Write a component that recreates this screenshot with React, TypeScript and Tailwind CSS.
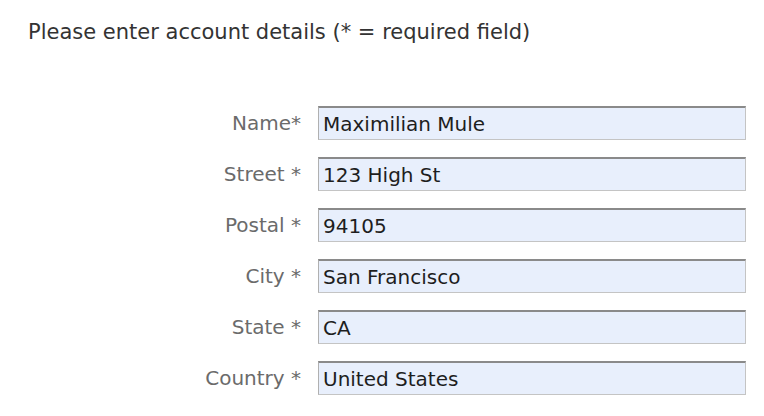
import React from 'react';

const fields = [
  { label: 'Name*', value: 'Maximilian Mule' },
  { label: 'Street *', value: '123 High St' },
  { label: 'Postal *', value: '94105' },
  { label: 'City *', value: 'San Francisco' },
  { label: 'State *', value: 'CA' },
  { label: 'Country *', value: 'United States' },
];

export default function App() {
  return (
    <div
      className="w-[764px] h-[416px] bg-white overflow-hidden"
      style={{ fontFamily: '"DejaVu Sans", "Noto Sans", sans-serif' }}
    >
      <p className="pl-[28px] pt-[18px] text-[21px] leading-[28px] text-[#333]">
        Please enter account details (* = required field)
      </p>
      <div className="mt-[60px] flex flex-col gap-[17px]">
        {fields.map((f) => (
          <div key={f.label} className="flex items-center">
            <label className="w-[301px] text-right text-[20px] text-[#6b6b6b]">
              {f.label}
            </label>
            <div className="ml-[17px] w-[428px] h-[34px] bg-[#e8effc] border border-[#c4c4c4] border-t-2 border-t-[#8a8a8a] border-l-[#b0b0b0] flex items-center pl-[4px] text-[20px] text-[#1e1e1e]">
              {f.value}
            </div>
          </div>
        ))}
      </div>
    </div>
  );
}
